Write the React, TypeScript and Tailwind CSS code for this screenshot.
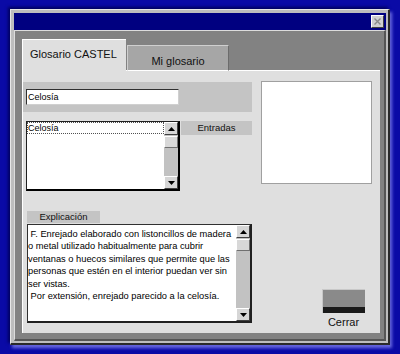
const sans = "font-['Liberation_Sans',Arial,sans-serif]";

const lines = [
  " F. Enrejado elaborado con listoncillos de madera",
  "o metal utilizado habitualmente para cubrir",
  "ventanas o huecos similares que permite que las",
  "personas que estén en el interior puedan ver sin",
  "ser vistas.",
  " Por extensión, enrejado parecido a la celosía.",
];

const ScrollArrow = ({ dir }: { dir: "up" | "down" }) => (
  <div className="w-[14px] h-[13px] shrink-0 bg-[#d6d6d6] border border-t-white border-l-white border-r-[#404040] border-b-[#404040] flex items-center justify-center">
    <svg width="7" height="4" viewBox="0 0 7 4">
      <path d={dir === "up" ? "M3.5 0L7 4H0Z" : "M0 0H7L3.5 4Z"} fill="#000" />
    </svg>
  </div>
);

const ScrollBar = () => (
  <div className="w-[14px] h-full flex flex-col bg-[#c2c2c2]">
    <ScrollArrow dir="up" />
    <div className="h-[12px] mt-px bg-[#d8d8d8] border border-t-white border-l-white border-r-[#707070] border-b-[#707070]" />
    <div className="flex-1" />
    <ScrollArrow dir="down" />
  </div>
);

const App = () => {
  return (
    <div className={`w-[400px] h-[354px] bg-[#0a0aa6] pt-[9px] pl-[10px] ${sans}`}>
      {/* ventana */}
      <div className="w-[380px] h-[336px] flex flex-col bg-[#bdbdbd] border-l border-t border-[#e6e6e6] border-r-2 border-b-2 border-r-[#2a2a2a] border-b-[#2a2a2a] pl-[3px] pt-[3px] pr-[2px] pb-[2px] shadow-[-2px_-2px_3px_#00005e,2px_3px_3px_#6c6ce2]">
        {/* barra de título */}
        <div className="h-[17px] bg-[#000080] flex items-center justify-end pr-[2px]">
          <div className="w-[13px] h-[13px] bg-[#d0d0d0] border border-t-white border-l-white border-r-[#404040] border-b-[#404040] flex items-center justify-center">
            <svg width="7" height="7" viewBox="0 0 7 7">
              <path d="M0.5 0.5L6.5 6.5M6.5 0.5L0.5 6.5" stroke="#8a8a8a" strokeWidth="1.4" />
            </svg>
          </div>
        </div>

        {/* cuerpo */}
        <div className="flex-1 flex flex-col bg-[#828282] border-l border-t border-[#dcdcdc] border-r-2 border-b-2 border-r-[#555555] border-b-[#555555] pl-[7px] pt-[8px] pr-[4px] pb-[6px]">
          {/* pestañas */}
          <div className="h-[32px] flex items-end">
            <div className="w-[104px] h-full bg-[#dfdfdf] border-l border-t border-white pt-[8px] pl-[7px] text-[11px] leading-[13px] text-[#111]">
              Glosario CASTEL
            </div>
            <div className="w-px h-px bg-white" />
            <div className="w-[102px] h-[26px] bg-[#a6a6a6] border-t border-l border-t-[#cfcfcf] border-l-[#cfcfcf] border-r border-r-[#6c6c6c] border-b border-b-white flex items-center justify-center pt-[7px] text-[11px] text-[#111]">
              Mi glosario
            </div>
            <div className="flex-1 h-px bg-white" />
          </div>

          {/* panel */}
          <div className="flex-1 flex bg-[#dfdfdf] border-l border-white">
            {/* columna izquierda */}
            <div className="w-[229px] flex flex-col">
              <div className="mt-[11px] h-[30px] bg-[#c4c4c4] pl-[3px] pt-[7px]">
                <div className="w-[153px] h-[16px] bg-white border-t border-l border-[#303030] border-r border-b border-r-[#d0d0d0] border-b-[#d0d0d0] pl-px text-[9px] leading-[14px] text-black">
                  Celosía
                </div>
              </div>

              <div className="mt-[9px] flex items-start">
                <div className="ml-[3px] w-[154px] h-[70px] flex bg-white border-t border-l border-[#202020] border-r-2 border-b-2 border-r-black border-b-black">
                  <div className="flex-1">
                    <div className="h-[12px] border border-dotted border-[#505050] text-[9px] leading-[10px] text-black">
                      Celosía
                    </div>
                  </div>
                  <ScrollBar />
                </div>
                <div className="ml-px w-[71px] h-[14px] bg-[#c4c4c4] text-[9.5px] leading-[14px] text-center text-[#111]">
                  Entradas
                </div>
              </div>

              <div className="mt-[20px] ml-[4px] w-[73px] h-[12px] bg-[#c4c4c4] text-[9.5px] leading-[12px] text-center text-[#111]">
                Explicación
              </div>

              <div className="mt-[1px] ml-[4px] w-[225px] h-[99px] flex bg-white border-t border-l border-[#303030] border-r-2 border-b-2 border-r-[#202020] border-b-[#202020]">
                <div className="flex-1 pt-[3px] text-[9.3px] leading-[12.4px] text-black">
                  {lines.map(l => (
                    <div key={l} className="whitespace-pre">
                      {l}
                    </div>
                  ))}
                </div>
                <ScrollBar />
              </div>
            </div>

            {/* columna derecha */}
            <div className="ml-[9px] flex flex-col">
              <div className="mt-[10px] w-[111px] h-[103px] bg-white border border-[#a0a0a0]" />
              <div className="mt-[105px] ml-[61px] w-[43px] flex flex-col items-center">
                <div className="w-[43px] h-[24px] flex flex-col border-t border-l border-[#c8c8c8]">
                  <div className="flex-1 bg-[#8a8a8a]" />
                  <div className="h-[6px] bg-[#1a1a1a]" />
                </div>
                <div className="mt-[3px] text-[11px] leading-[13px] text-[#111]">Cerrar</div>
              </div>
            </div>
          </div>
        </div>
      </div>
    </div>
  );
};

export default App;
